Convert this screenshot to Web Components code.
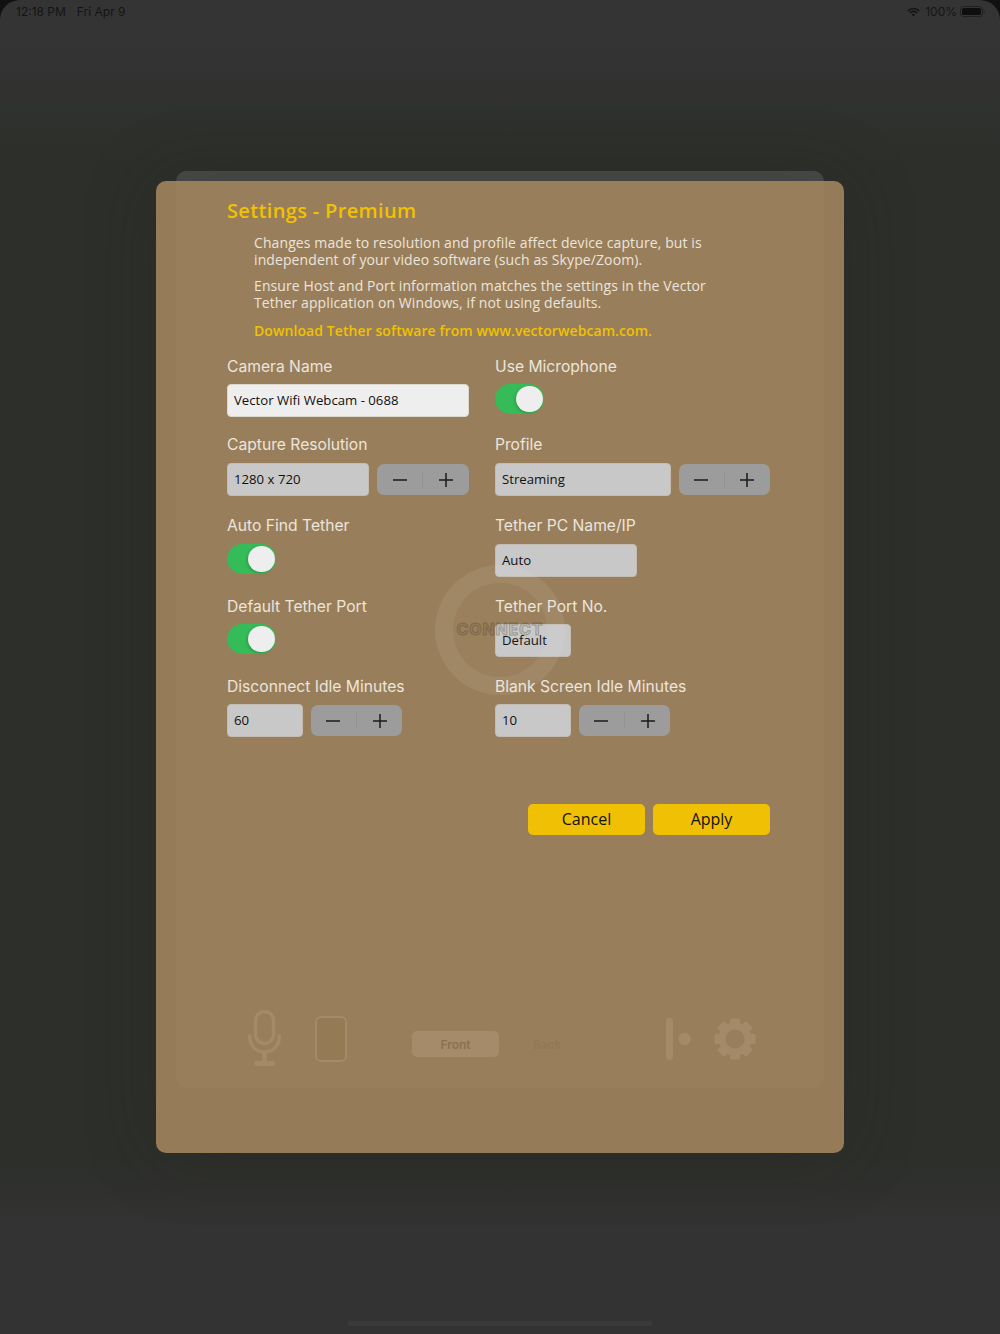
<!DOCTYPE html>
<html lang="en">
<head>
<meta charset="utf-8">
<title>Settings - Premium</title>
<style>
  html, body { margin: 0; background: #333; }
</style>
</head>
<body>
<app-frame>
  <settings-modal heading="Settings - Premium">
    <info-note>Changes made to resolution and profile affect device capture, but is<br>independent of your video software (such as Skype/Zoom).</info-note>
    <info-note>Ensure Host and Port information matches the settings in the Vector<br>Tether application on Windows, if not using defaults.</info-note>
    <info-note link>Download Tether software from www.vectorwebcam.com.</info-note>

    <form-grid>
      <form-field label="Camera Name"><text-box bright style="width:242px">Vector Wifi Webcam - 0688</text-box></form-field>
      <form-field label="Use Microphone"><toggle-switch></toggle-switch></form-field>

      <form-field label="Capture Resolution" tall><text-box style="width:142px">1280 x 720</text-box><step-pair></step-pair></form-field>
      <form-field label="Profile" tall><text-box style="width:176px">Streaming</text-box><step-pair></step-pair></form-field>

      <form-field label="Auto Find Tether" tall><toggle-switch></toggle-switch></form-field>
      <form-field label="Tether PC Name/IP" tall><text-box style="width:142px">Auto</text-box></form-field>

      <form-field label="Default Tether Port"><toggle-switch></toggle-switch></form-field>
      <form-field label="Tether Port No."><text-box style="width:75.700px">Default</text-box></form-field>

      <form-field label="Disconnect Idle Minutes"><text-box style="width:75.700px">60</text-box><step-pair></step-pair></form-field>
      <form-field label="Blank Screen Idle Minutes"><text-box style="width:75.700px">10</text-box><step-pair></step-pair></form-field>
    </form-grid>

    <button-row>
      <action-button>Cancel</action-button>
      <action-button>Apply</action-button>
    </button-row>
  </settings-modal>
</app-frame>

<script>
const BODY_FONT = `"Open Sans", "Noto Sans", sans-serif`
const LABEL_FONT = `Inter, Roboto, sans-serif`

// small helper so each class stays a style + markup pair
function shadow(el, html) {
  el.attachShadow({ mode: 'open' }).innerHTML = html
}

class AppFrame extends HTMLElement {
  constructor() {
    super()
    shadow(this, `
      <style>
        :host { display: block; position: relative; isolation: isolate; width: 1000px; height: 1334px; overflow: hidden;
          background: linear-gradient(#343434 0, #323332 60px, #2d2f2b 165px, #2d2f2b 1160px, #333 1230px); }
        .corner { position: absolute; top: 0; width: 20px; height: 20px; }
        .home { position: absolute; left: 347px; top: 1321px; width: 306px; height: 5px; border-radius: 3px; background: #3a3a3a; }
      </style>
      <status-bar></status-bar>
      <slot></slot>
      <svg class="corner" style="left:0" viewBox="0 0 20 20"><path d="M0 0H20A20 20 0 0 0 0 20Z" fill="#111"/></svg>
      <svg class="corner" style="right:0" viewBox="0 0 20 20"><path d="M20 0H0A20 20 0 0 1 20 20Z" fill="#111"/></svg>
      <div class="home"></div>
    `)
  }
}

class StatusBar extends HTMLElement {
  constructor() {
    super()
    shadow(this, `
      <style>
        :host { display: flex; align-items: center; height: 23px; padding: 0 15px 0 16px; box-sizing: border-box;
          font: 12px ${LABEL_FONT}; color: #141414; }
        .date { margin-left: 11px; }
        .right { margin-left: auto; display: flex; align-items: center; }
        .pct { margin: 0 3px 0 5px; }
        svg { display: block; }
      </style>
      <span>12:18 PM</span><span class="date">Fri Apr 9</span>
      <span class="right">
        <svg width="13" height="10" viewBox="0 0 15 11" fill="none" stroke="#141414" stroke-width="1.8">
          <path d="M1 4.2a9.2 9.2 0 0 1 13 0"/><path d="M3.3 6.5a6 6 0 0 1 8.4 0"/>
          <path d="M7.5 10.6 5.5 8.5a2.9 2.9 0 0 1 4 0Z" fill="#141414" stroke="none"/>
        </svg>
        <span class="pct">100%</span>
        <svg width="25" height="11" viewBox="0 0 25 11">
          <rect x=".5" y=".5" width="22" height="10" rx="3" fill="none" stroke="#141414" opacity=".6"/>
          <rect x="2" y="2" width="19" height="7" rx="1.6" fill="#0e0e0e"/>
          <path d="M23.500 3.500v4a2 2 0 0 0 1.200-2 2 2 0 0 0-1.200-2Z" fill="#141414" opacity=".6"/>
        </svg>
      </span>
    `)
  }
}

class SettingsModal extends HTMLElement {
  constructor() {
    super()
    shadow(this, `
      <style>
        :host { display: block; position: relative; width: 688px; height: 972px; box-sizing: border-box;
          margin: 158px auto 0; padding: 16px 74px 0 71px; border-radius: 10px; background: #967b58;
          box-shadow: 0 0 70px rgba(36,38,30,.3); }
        .behind { position: absolute; left: 20px; right: 20px; top: -10px; height: 30px; border-radius: 10px 10px 0 0; background: #4a4a4a; z-index: -1; }
        .inner { position: absolute; left: 20px; right: 20px; top: 0; height: 907px; border-radius: 0 0 10px 10px; background: #997e5b; }
        h1 { position: relative; margin: 0 0 9px; font: 600 20px/28px ${BODY_FONT}; letter-spacing: .35px; color: #f0c200; white-space: nowrap; }
        .content { position: relative; }
      </style>
      <div class="behind"></div>
      <div class="inner"></div>
      <h1></h1>
      <div class="content"><slot></slot></div>
      <connect-ghost></connect-ghost>
      <ghost-toolbar></ghost-toolbar>
    `)
    this.shadowRoot.querySelector('h1').textContent = this.getAttribute('heading')
  }
}

class InfoNote extends HTMLElement {
  constructor() {
    super()
    shadow(this, `
      <style>
        :host { display: block; margin: 0 0 9px 27px; font: 14px/17px ${BODY_FONT}; letter-spacing: .1px; color: #ebe5dc; white-space: nowrap; }
        :host([link]) { color: #f0c200; font-weight: 600; letter-spacing: .08px; margin-top: 11px; margin-bottom: 16px; line-height: 18px; }
      </style>
      <slot></slot>
    `)
  }
}

class FormGrid extends HTMLElement {
  constructor() {
    super()
    shadow(this, `
      <style>
        :host { display: grid; grid-template-columns: 242px 275px; column-gap: 26px;
          grid-template-rows: 78px 81px 81px 80px 61px; }
      </style>
      <slot></slot>
    `)
  }
}

class FormField extends HTMLElement {
  constructor() {
    super()
    shadow(this, `
      <style>
        :host { display: block; }
        label { display: block; height: 20px; margin-bottom: 8px; font: 15.650px/22px ${LABEL_FONT}; color: #ebe5dc; white-space: nowrap; }
        :host([tall]) label { margin-bottom: 9px; }
        .row { display: flex; align-items: center; gap: 8px; }
      </style>
      <label></label>
      <div class="row"><slot></slot></div>
    `)
    this.shadowRoot.querySelector('label').textContent = this.getAttribute('label')
  }
}

class TextBox extends HTMLElement {
  constructor() {
    super()
    shadow(this, `
      <style>
        :host { display: block; height: 33px; box-sizing: border-box; padding: 0 6px; border: 1px solid #c2bcb2; border-radius: 4px;
          background: #c8c8c8; font: 13.200px/30px ${BODY_FONT}; color: #111; white-space: nowrap; }
        :host([bright]) { background: #eeeeee; border-color: #ddd8d0; }
      </style>
      <slot></slot>
    `)
  }
}

class StepPair extends HTMLElement {
  constructor() {
    super()
    shadow(this, `
      <style>
        :host { display: flex; align-items: center; width: 91.700px; height: 31px; border-radius: 7px; background: #9c9c9c; }
        span { flex: 1; display: flex; justify-content: center; }
        i { width: 1px; height: 17px; background: #939393; }
        svg { display: block; }
      </style>
      <span><svg width="14" height="14" viewBox="0 0 14 14"><path d="M0 7H14" stroke="#1a1a1a" stroke-width="1.5"/></svg></span>
      <i></i>
      <span><svg width="14" height="14" viewBox="0 0 14 14"><path d="M0 7H14M7 0V14" stroke="#1a1a1a" stroke-width="1.5"/></svg></span>
    `)
  }
}

class ToggleSwitch extends HTMLElement {
  constructor() {
    super()
    shadow(this, `
      <style>
        :host { display: flex; justify-content: flex-end; align-items: center; width: 49px; height: 30px; box-sizing: border-box;
          padding-right: 1.500px; border-radius: 15px; background: #35bb57; }
        i { width: 26.500px; height: 26.500px; border-radius: 50%; background: #eeeeee; box-shadow: -1px 1px 3px rgba(0,0,0,.18); }
      </style>
      <i></i>
    `)
  }
}

class ButtonRow extends HTMLElement {
  constructor() {
    super()
    shadow(this, `
      <style>
        :host { display: flex; justify-content: flex-end; gap: 8px; width: 543px; margin-top: 67px; }
      </style>
      <slot></slot>
    `)
  }
}

class ActionButton extends HTMLElement {
  constructor() {
    super()
    shadow(this, `
      <style>
        :host { display: block; width: 117px; height: 31px; border-radius: 5px; background: #efc003;
          font: 16px/31px ${BODY_FONT}; color: #111; text-align: center; }
      </style>
      <slot></slot>
    `)
  }
}

// the dimmed connect button sitting over the form
class ConnectGhost extends HTMLElement {
  constructor() {
    super()
    shadow(this, `
      <style>
        :host { position: absolute; left: 279px; top: 384px; width: 130px; height: 130px; box-sizing: border-box;
          display: flex; align-items: center; justify-content: center; border-radius: 50%;
          border: 18px solid rgba(255,255,255,.07); background: rgba(255,255,255,.02) padding-box; pointer-events: none; }
        span { position: relative; top: -1.500px; font: 800 16px/1 ${LABEL_FONT}; letter-spacing: .8px; color: rgba(70,58,40,.1);
          -webkit-text-stroke: 1px rgba(60,48,30,.3); white-space: nowrap; }
      </style>
      <span>CONNECT</span>
    `)
  }
}

// dimmed bottom toolbar of the page behind the modal
class GhostToolbar extends HTMLElement {
  constructor() {
    super()
    shadow(this, `
      <style>
        :host { position: absolute; left: 92px; top: 829px; width: 520px; height: 56px; display: flex; align-items: center; pointer-events: none; }
        svg { display: block; flex: none; }
        .seg { display: flex; align-items: center; margin-left: 65px; margin-top: 12px; font: 600 12px/27px ${LABEL_FONT}; }
        .front { width: 87px; height: 26px; border-radius: 5px; background: #a58b69; color: #8b7151; text-align: center; }
        .back { width: 96px; text-align: center; color: #937856; }
      </style>
      <svg width="33" height="56" viewBox="0 0 33 56" fill="none" stroke="#a48a68">
        <rect x="7.5" y="1.5" width="18" height="32" rx="9" stroke-width="3.4"/>
        <path d="M1.8 24.5v3a14.7 14.7 0 0 0 29.4 0v-3" stroke-width="3.4"/>
        <path d="M16.5 42v11" stroke-width="4.5"/>
        <path d="M8.5 53.5h16" stroke-width="5" stroke-linecap="round"/>
      </svg>
      <svg style="margin-left:34px;margin-top:2px" width="32" height="46" viewBox="0 0 32 46">
        <rect x="1" y="1" width="30" height="44" rx="5" fill="#957a56" stroke="#a48a68" stroke-width="2"/>
      </svg>
      <div class="seg"><div class="front">Front</div><div class="back">Back</div></div>
      <svg style="margin-left:71px;margin-top:2px" width="25" height="42" viewBox="0 0 25 42" fill="#a48a68">
        <rect x="0" y="0" width="7" height="42" rx="3"/>
        <circle cx="18.500" cy="21" r="6.200"/>
      </svg>
      <svg style="margin-left:23px;margin-top:2px" width="42" height="42" viewBox="-21 -21 42 42" fill="#a48a68">
        <circle r="13" fill="none" stroke="#a48a68" stroke-width="7"/>
        <rect x="-5" y="-20.500" width="10" height="8" rx="1.500"/>
        <rect x="-5" y="-20.500" width="10" height="8" rx="1.500" transform="rotate(45)"/>
        <rect x="-5" y="-20.500" width="10" height="8" rx="1.500" transform="rotate(90)"/>
        <rect x="-5" y="-20.500" width="10" height="8" rx="1.500" transform="rotate(135)"/>
        <rect x="-5" y="-20.500" width="10" height="8" rx="1.500" transform="rotate(180)"/>
        <rect x="-5" y="-20.500" width="10" height="8" rx="1.500" transform="rotate(225)"/>
        <rect x="-5" y="-20.500" width="10" height="8" rx="1.500" transform="rotate(270)"/>
        <rect x="-5" y="-20.500" width="10" height="8" rx="1.500" transform="rotate(315)"/>
      </svg>
    `)
  }
}

customElements.define('status-bar', StatusBar)
customElements.define('connect-ghost', ConnectGhost)
customElements.define('ghost-toolbar', GhostToolbar)
customElements.define('info-note', InfoNote)
customElements.define('form-grid', FormGrid)
customElements.define('form-field', FormField)
customElements.define('text-box', TextBox)
customElements.define('step-pair', StepPair)
customElements.define('toggle-switch', ToggleSwitch)
customElements.define('button-row', ButtonRow)
customElements.define('action-button', ActionButton)
customElements.define('settings-modal', SettingsModal)
customElements.define('app-frame', AppFrame)
</script>
</body>
</html>
